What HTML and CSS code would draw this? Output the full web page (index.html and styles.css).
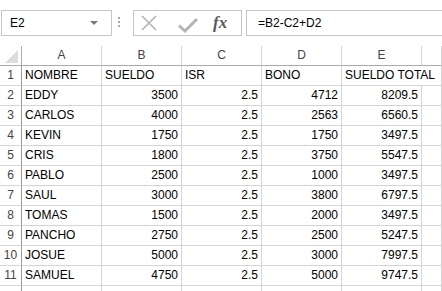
FILE: index.html
```
<!DOCTYPE html>
<html lang="es">
    <head>
        <meta charset="UTF-8" />
        <title>Hoja de cálculo</title>
        <link rel="stylesheet" href="styles.css">
    </head>
    <body>
        <div class="toolbar">
            <div class="name-box">
                <span>E2</span>
                <span class="caret"></span>
            </div>
            <div class="grip"><i></i><i></i><i></i></div>
            <div class="fx-box">
                <svg class="icon-x" width="18" height="18" viewBox="0 0 18 18">
                    <path d="M2 2 L16 16 M16 2 L2 16" stroke="#b4b4b4" stroke-width="1.6" fill="none" />
                </svg>
                <svg class="icon-check" width="20" height="16" viewBox="0 0 20 16">
                    <path d="M1 8.5 L7 14 L19 2" stroke="#b4b4b4" stroke-width="3" fill="none" />
                </svg>
                <span class="fx">fx</span>
            </div>
            <div class="formula">=B2-C2+D2</div>
        </div>

        <div class="sheet">
            <div class="corner">
                <svg width="22" height="20" viewBox="0 0 22 20">
                    <polygon points="5,17 18,17 18,4" fill="#dcdcdc" />
                </svg>
            </div>
            <div class="col-head">A</div>
            <div class="col-head">B</div>
            <div class="col-head">C</div>
            <div class="col-head">D</div>
            <div class="col-head">E</div>
            <div class="col-head"></div>

            <div class="row-head">1</div>
            <div class="cell">NOMBRE</div>
            <div class="cell">SUELDO</div>
            <div class="cell">ISR</div>
            <div class="cell">BONO</div>
            <!-- el texto se desborda sobre la columna F, como en Excel -->
            <div class="cell spill">SUELDO TOTAL</div>

            <div class="row-head">2</div>
            <div class="cell">EDDY</div>
            <div class="cell num">3500</div>
            <div class="cell num">2.5</div>
            <div class="cell num">4712</div>
            <div class="cell num">8209.5</div>
            <div class="cell"></div>

            <div class="row-head">3</div>
            <div class="cell">CARLOS</div>
            <div class="cell num">4000</div>
            <div class="cell num">2.5</div>
            <div class="cell num">2563</div>
            <div class="cell num">6560.5</div>
            <div class="cell"></div>

            <div class="row-head">4</div>
            <div class="cell">KEVIN</div>
            <div class="cell num">1750</div>
            <div class="cell num">2.5</div>
            <div class="cell num">1750</div>
            <div class="cell num">3497.5</div>
            <div class="cell"></div>

            <div class="row-head">5</div>
            <div class="cell">CRIS</div>
            <div class="cell num">1800</div>
            <div class="cell num">2.5</div>
            <div class="cell num">3750</div>
            <div class="cell num">5547.5</div>
            <div class="cell"></div>

            <div class="row-head">6</div>
            <div class="cell">PABLO</div>
            <div class="cell num">2500</div>
            <div class="cell num">2.5</div>
            <div class="cell num">1000</div>
            <div class="cell num">3497.5</div>
            <div class="cell"></div>

            <div class="row-head">7</div>
            <div class="cell">SAUL</div>
            <div class="cell num">3000</div>
            <div class="cell num">2.5</div>
            <div class="cell num">3800</div>
            <div class="cell num">6797.5</div>
            <div class="cell"></div>

            <div class="row-head">8</div>
            <div class="cell">TOMAS</div>
            <div class="cell num">1500</div>
            <div class="cell num">2.5</div>
            <div class="cell num">2000</div>
            <div class="cell num">3497.5</div>
            <div class="cell"></div>

            <div class="row-head">9</div>
            <div class="cell">PANCHO</div>
            <div class="cell num">2750</div>
            <div class="cell num">2.5</div>
            <div class="cell num">2500</div>
            <div class="cell num">5247.5</div>
            <div class="cell"></div>

            <div class="row-head">10</div>
            <div class="cell">JOSUE</div>
            <div class="cell num">5000</div>
            <div class="cell num">2.5</div>
            <div class="cell num">3000</div>
            <div class="cell num">7997.5</div>
            <div class="cell"></div>

            <div class="row-head">11</div>
            <div class="cell">SAMUEL</div>
            <div class="cell num">4750</div>
            <div class="cell num">2.5</div>
            <div class="cell num">5000</div>
            <div class="cell num">9747.5</div>
            <div class="cell"></div>

            <div class="row-head"></div>
            <div class="cell"></div>
            <div class="cell"></div>
            <div class="cell"></div>
            <div class="cell"></div>
            <div class="cell"></div>
            <div class="cell"></div>
        </div>
    </body>
</html>
```

FILE: styles.css
```
* {
    margin: 0;
    padding: 0;
    box-sizing: border-box;
}
body {
    font-family: "Liberation Sans", Arial, sans-serif;
    font-size: 12px;
    color: #000;
    background: #fff;
    height: 100vh;
    overflow: hidden;
}

/* barra de fórmulas */
.toolbar {
    display: flex;
    align-items: flex-start;
    height: 46px;
    padding-top: 10px;
}
.name-box {
    display: flex;
    align-items: center;
    justify-content: space-between;
    width: 111px;
    height: 26px;
    margin-left: 1px;
    padding: 0 13px 0 8px;
    border: 1px solid #c6c6c6;
    font-size: 12px;
}
.caret {
    width: 0;
    height: 0;
    border-left: 4px solid transparent;
    border-right: 4px solid transparent;
    border-top: 4px solid #777;
}
.grip {
    display: flex;
    flex-direction: column;
    gap: 2px;
    margin: 7px 0 0 6px;
}
.grip i {
    display: block;
    width: 2px;
    height: 2px;
    background: #a8a8a8;
}
.fx-box {
    display: flex;
    align-items: center;
    width: 109px;
    height: 26px;
    margin-left: 13px;
    padding-left: 6px;
    border: 1px solid #c6c6c6;
}
.icon-check {
    margin-left: 20px;
    margin-top: 3px;
}
.fx {
    margin-left: 15px;
    font-family: "Liberation Serif", "Times New Roman", serif;
    font-style: italic;
    font-weight: bold;
    font-size: 17px;
    color: #5a5a5a;
}
.formula {
    flex: 1;
    height: 26px;
    margin-left: 4px;
    margin-right: -2px;
    padding-left: 11px;
    line-height: 24px;
    border: 1px solid #c6c6c6;
}

/* hoja */
.sheet {
    display: grid;
    grid-template-columns: 22px repeat(5, 80px) 1fr;
    grid-auto-rows: 20px;
}
.corner,
.col-head {
    border-right: 1px solid #d5d5d5;
    border-bottom: 1px solid #ababab;
}
.corner {
    border-right-color: #ababab;
}
.col-head {
    text-align: center;
    line-height: 19px;
    color: #444;
}
.row-head {
    border-right: 1px solid #9b9b9b;
    border-bottom: 1px solid #d5d5d5;
    text-align: center;
    line-height: 19px;
    color: #444;
}
.cell {
    border-right: 1px solid #d4d4d4;
    border-bottom: 1px solid #d4d4d4;
    padding: 0 3px;
    line-height: 19px;
    white-space: nowrap;
    overflow: hidden;
}
.cell.spill {
    grid-column: span 2;
}
.num {
    text-align: right;
}
```
